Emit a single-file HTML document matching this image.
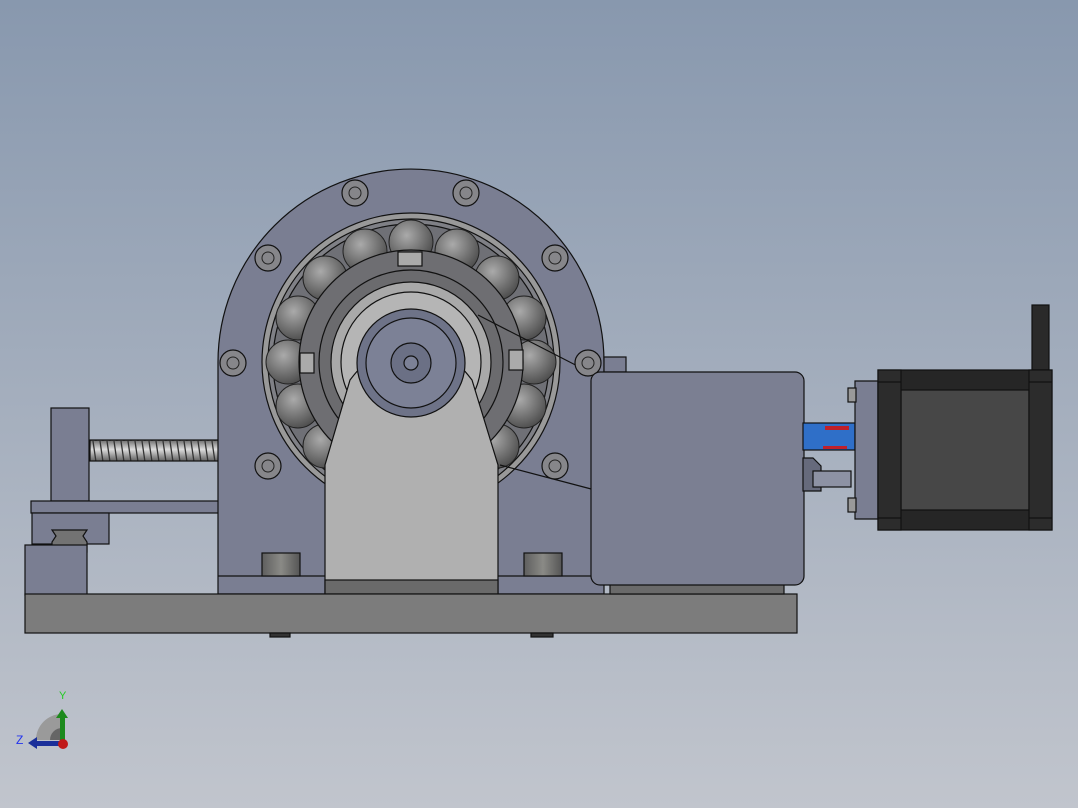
<!DOCTYPE html><html><head><style>body{margin:0}svg{display:block}</style></head><body>
<svg width="1078" height="808" viewBox="0 0 1078 808" xmlns="http://www.w3.org/2000/svg" font-family="Liberation Sans, sans-serif">
<defs>
<linearGradient id="bg" x1="0" y1="0" x2="0" y2="1"><stop offset="0" stop-color="#8898ae"/><stop offset="1" stop-color="#c1c5cd"/></linearGradient>
<linearGradient id="scr" x1="0" y1="0" x2="0" y2="1"><stop offset="0" stop-color="#777"/><stop offset=".4" stop-color="#ddd"/><stop offset="1" stop-color="#555"/></linearGradient>
<pattern id="thr" width="7" height="21" patternUnits="userSpaceOnUse"><rect width="7" height="21" fill="url(#scr)"/><path d="M2 0l3 21" stroke="#333" stroke-width="1.3"/></pattern>
<linearGradient id="cyl" x1="0" y1="0" x2="1" y2="0"><stop offset="0" stop-color="#5e5e5e"/><stop offset=".5" stop-color="#8a8a86"/><stop offset="1" stop-color="#555"/></linearGradient>
<radialGradient id="ball" cx=".4" cy=".35" r=".7"><stop offset="0" stop-color="#aaa"/><stop offset="1" stop-color="#4a4a4a"/></radialGradient>
</defs>
<rect width="1078" height="808" fill="url(#bg)"/>
<g stroke="#111" stroke-width="1.2">
<rect x="90" y="440" width="130" height="21" fill="url(#thr)"/>
<rect x="51" y="408" width="38" height="93" fill="#7a7e92"/>
<rect x="31" y="501" width="189" height="12" fill="#7a7e92"/>
<rect x="32" y="513" width="77" height="31" fill="#7a7e92"/>
<path d="M52 530h35l-4 6 4 6v10H52v-10l4-6z" fill="#737373"/>
<rect x="25" y="545" width="62" height="50" fill="#7a7e92"/>
<path d="M218 594V362A193 193 0 0 1 604 362V594Z" fill="#7a7e92"/>
<line x1="218" y1="576" x2="604" y2="576"/>
<circle cx="411" cy="362" r="149" fill="#999"/>
<circle cx="411" cy="362" r="143" fill="#7f8086"/>
<circle cx="411" cy="362" r="138" fill="#6f7076"/>
</g>
<g fill="url(#ball)" stroke="#222" stroke-width="1">
<circle cx="411" cy="242" r="22"/><circle cx="365" cy="251" r="22"/><circle cx="457" cy="251" r="22"/>
<circle cx="325" cy="278" r="22"/><circle cx="497" cy="278" r="22"/><circle cx="298" cy="318" r="22"/><circle cx="524" cy="318" r="22"/>
<circle cx="288" cy="362" r="22"/><circle cx="534" cy="362" r="22"/><circle cx="298" cy="406" r="22"/><circle cx="524" cy="406" r="22"/>
<circle cx="325" cy="446" r="22"/><circle cx="497" cy="446" r="22"/>
</g>
<g stroke="#111" stroke-width="1.2">
<circle cx="411" cy="362" r="112" fill="#6e6e72"/>
<circle cx="411" cy="362" r="92" fill="#6b6b6e"/>
<circle cx="411" cy="362" r="80" fill="#a9a9a9"/>
<circle cx="411" cy="362" r="70" fill="#b5b5b5"/>
<rect x="398" y="252" width="24" height="14" fill="#aaa"/>
<rect x="300" y="353" width="14" height="20" fill="#aaa"/>
<rect x="509" y="350" width="14" height="20" fill="#aaa"/>
<path d="M325 594V465L350 380Q411 300 472 380L498 465V594Z" fill="#b0b0b0"/>
<rect x="325" y="580" width="173" height="14" fill="#6a6a6a"/>
<circle cx="411" cy="363" r="54" fill="#6e7388"/>
<circle cx="411" cy="363" r="45" fill="#7c8196"/>
<circle cx="411" cy="363" r="20" fill="#6b7085"/>
<circle cx="411" cy="363" r="7" fill="#7c8196"/>
<rect x="262" y="553" width="38" height="23" fill="url(#cyl)"/>
<rect x="524" y="553" width="38" height="23" fill="url(#cyl)"/>
<line x1="478" y1="315" x2="595" y2="375"/><line x1="500" y1="465" x2="595" y2="490"/>
</g>
<g fill="#86868a" stroke="#111" stroke-width="1.2">
<circle cx="355" cy="193" r="13"/><circle cx="466" cy="193" r="13"/><circle cx="268" cy="258" r="13"/><circle cx="555" cy="258" r="13"/>
<circle cx="233" cy="363" r="13"/><circle cx="588" cy="363" r="13"/><circle cx="268" cy="466" r="13"/><circle cx="555" cy="466" r="13"/>
</g>
<g fill="none" stroke="#222" stroke-width="1">
<circle cx="355" cy="193" r="6"/><circle cx="466" cy="193" r="6"/><circle cx="268" cy="258" r="6"/><circle cx="555" cy="258" r="6"/>
<circle cx="233" cy="363" r="6"/><circle cx="588" cy="363" r="6"/><circle cx="268" cy="466" r="6"/><circle cx="555" cy="466" r="6"/>
</g>
<g stroke="#111" stroke-width="1.2">
<rect x="604" y="357" width="22" height="15" fill="#7a7e92"/>
<rect x="25" y="594" width="772" height="39" fill="#7c7c7c"/>
<rect x="270" y="633" width="20" height="4" fill="#333"/><rect x="531" y="633" width="22" height="4" fill="#333"/>
<rect x="610" y="584" width="174" height="10" fill="#6a6a6a"/>
<rect x="591" y="372" width="213" height="213" rx="9" fill="#7b7f92"/>
<rect x="803" y="423" width="52" height="27" fill="#2f6fc8"/>
<rect x="825" y="426" width="24" height="4" fill="#c0202a" stroke="none"/>
<rect x="823" y="446" width="24" height="3" fill="#c0202a" stroke="none"/>
<path d="M803 458h10l8 8v25h-18z" fill="#666a7c"/>
<rect x="813" y="471" width="38" height="16" fill="#8d92a4"/>
<path d="M855 381h23v138h-23z" fill="#7a7e92"/>
<rect x="848" y="388" width="8" height="14" fill="#999"/><rect x="848" y="498" width="8" height="14" fill="#999"/>
<rect x="1032" y="305" width="17" height="65" fill="#2a2a2a"/>
<rect x="878" y="370" width="174" height="160" fill="#262626"/>
<rect x="901" y="390" width="128" height="120" fill="#474747"/>
<rect x="878" y="370" width="23" height="160" fill="#2c2c2c"/>
<rect x="1029" y="370" width="23" height="160" fill="#2c2c2c"/>
<line x1="878" y1="382" x2="901" y2="382"/><line x1="1029" y1="382" x2="1052" y2="382"/>
<line x1="878" y1="518" x2="901" y2="518"/><line x1="1029" y1="518" x2="1052" y2="518"/>
</g>
<path d="M36 740A26 26 0 0 1 62 714V740Z" fill="#9a9a9a"/>
<path d="M50 740A12 12 0 0 1 62 728V740Z" fill="#666"/>
<rect x="60" y="716" width="5" height="26" fill="#1d8a1d"/><path d="M56 718l6-9 6 9z" fill="#1d8a1d"/>
<rect x="36" y="741" width="26" height="5" fill="#1a2f9a"/><path d="M37 737l-9 6 9 6z" fill="#1a2f9a"/>
<circle cx="63" cy="744" r="5" fill="#c01818"/>
<text x="59" y="699" font-size="11" fill="#22cc22">Y</text>
<text x="16" y="744" font-size="12" fill="#2233ee">Z</text>
</svg>
</body></html>
